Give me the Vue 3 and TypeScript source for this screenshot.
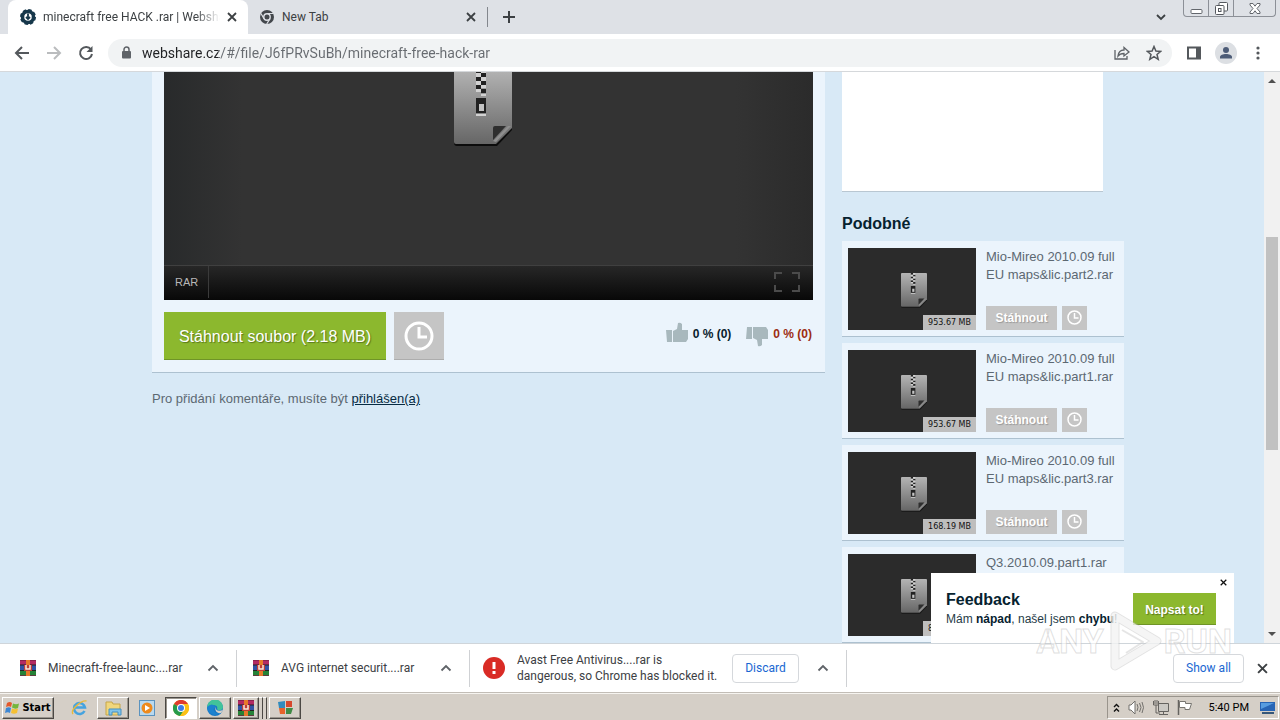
<script setup lang="ts">
import { ref } from 'vue'

interface SimilarFile {
  lines: string[]
  size: string
}

interface DownloadItem {
  name: string
}

const address = ref('webshare.cz/#/file/J6fPRvSuBh/minecraft-free-hack-rar')

const similar: SimilarFile[] = [
  { lines: ['Mio-Mireo 2010.09 full', 'EU maps&lic.part2.rar'], size: '953.67 MB' },
  { lines: ['Mio-Mireo 2010.09 full', 'EU maps&lic.part1.rar'], size: '953.67 MB' },
  { lines: ['Mio-Mireo 2010.09 full', 'EU maps&lic.part3.rar'], size: '168.19 MB' },
  { lines: ['Q3.2010.09.part1.rar'], size: '858.31 MB' },
]

const downloads: DownloadItem[] = [
  { name: 'Minecraft-free-launc....rar' },
  { name: 'AVG internet securit....rar' },
]
</script>

<template>
  <div class="screen">
    <svg class="defs" width="0" height="0" aria-hidden="true">
      <defs>
        <linearGradient id="paper" x1="0" y1="0" x2="0" y2="1">
          <stop offset="0" stop-color="#b4b4b4" />
          <stop offset="1" stop-color="#666" />
        </linearGradient>
        <symbol id="zip" viewBox="0 0 58 78">
          <path d="M2 2h54q2 0 2 2v57L43 77H3q-3 0-3-3V4q0-2 2-2z" fill="#0c0c0c" />
          <path d="M2 0h54q2 0 2 2v57L42 75H2q-2 0-2-2V2q0-2 2-2z" fill="url(#paper)" />
          <path d="M39 71V59q0-2 2-2h11z" fill="#2e2e2e" />
          <path d="M39 72l15-15h3L42 73z" fill="#8e8e8e" />
          <path d="M22 0h5v4h-5zM27 4h5v4h-5zM22 8h5v4h-5zM27 12h5v4h-5zM22 16h5v4h-5zM27 20h5v4h-5zM22 29h10v15H22z" fill="#222" />
          <path d="M27 0h5v4h-5zM22 4h5v4h-5zM27 8h5v4h-5zM22 12h5v4h-5zM27 16h5v3h-5zM22 20h5v3h-5zM27 25h5v2h-5zM22 45h10v2H22z" fill="#d2d2d2" />
          <rect x="25" y="35" width="5" height="7" fill="#c4c4c4" />
        </symbol>
        <symbol id="clock" viewBox="0 0 30 30">
          <circle cx="15" cy="15" r="13" fill="none" stroke="#fff" stroke-width="3" />
          <path d="M15 6v10h8" fill="none" stroke="#fff" stroke-width="3" />
        </symbol>
        <symbol id="cross" viewBox="0 0 10 10">
          <path d="M1 1l8 8M9 1L1 9" fill="none" stroke="currentColor" stroke-width="1.8" />
        </symbol>
        <symbol id="chevron" viewBox="0 0 12 8">
          <path d="M1.5 6.5L6 2l4.5 4.5" fill="none" stroke="#5f6368" stroke-width="1.8" />
        </symbol>
        <symbol id="winrar" viewBox="0 0 16 16">
          <rect y="0" width="16" height="5" fill="#b32a63" />
          <rect y="5" width="16" height="6" fill="#3152a5" />
          <rect y="11" width="16" height="5" fill="#268237" />
          <path d="M0 5h16M0 10.500h16" stroke="#222" />
          <path d="M0 .5h16M0 15.500h16" stroke="#772044" stroke-width=".7" />
          <rect x="6" width="4" height="16" fill="#e77a2a" />
          <rect x="4" y="5" width="8" height="6" fill="#be3c38" />
          <path d="M6 5v4h4V5" fill="none" stroke="#f7e9dc" stroke-width="1.500" />
        </symbol>
        <symbol id="chrome" viewBox="0 0 16 16">
          <circle cx="8" cy="8" r="8" fill="#fbc116" />
          <path d="M8 8L1 4a8 8 0 0 1 14 0z" fill="#df3b2f" />
          <path d="M8 8L1 4a8 8 0 0 0 6 12l4.500-6.500z" fill="#269b4b" />
          <path d="M8 4h7a8 8 0 0 1-8 12l4.500-6z" fill="#fbc116" />
          <circle cx="8" cy="8" r="4" fill="#fff" />
          <circle cx="8" cy="8" r="3" fill="#3c7de6" />
        </symbol>
        <symbol id="thumb" viewBox="0 0 22 20">
          <path d="M0 8h6v12H1zM7 9l4-2 1-6q2-1 4 1v6h6v9l-2 3H7z" fill="#a8b8bd" />
        </symbol>
      </defs>
    </svg>

    <header class="tabs">
      <div class="tab active">
        <svg width="16" height="16" viewBox="0 0 16 16">
          <circle cx="8" cy="8" r="5.500" fill="none" stroke="#17384b" stroke-width="3.500" />
          <circle cx="8" cy="8" r="7" fill="none" stroke="#17384b" stroke-width="2" stroke-dasharray="3.500 2" />
          <path d="M8 4.500v5M6 8l2 2 2-2" fill="none" stroke="#17384b" stroke-width="1.800" />
        </svg>
        <span class="tab-title fade">minecraft free HACK .rar | Webshare</span>
        <button class="plain" aria-label="Close tab"><svg width="10" height="10"><use href="#cross" /></svg></button>
      </div>
      <div class="tab">
        <svg width="14" height="14" viewBox="0 0 14 14">
          <circle cx="7" cy="7" r="7" fill="#43474c" />
          <circle cx="7" cy="7" r="3.200" fill="#43474c" stroke="#dee1e6" stroke-width="1.400" />
          <path d="M7 3.500h6.500M4 8.700L1 3.500M10 8.700L6.700 14" stroke="#dee1e6" stroke-width="1.200" />
        </svg>
        <span class="tab-title">New Tab</span>
        <button class="plain" aria-label="Close tab"><svg width="10" height="10"><use href="#cross" /></svg></button>
      </div>
      <i class="tab-sep"></i>
      <button class="plain new-tab" aria-label="New tab">
        <svg width="12" height="12" viewBox="0 0 12 12"><path d="M6 0v12M0 6h12" stroke="#3c4043" stroke-width="2" /></svg>
      </button>
      <button class="plain tab-search" aria-label="Search tabs">
        <svg width="10" height="7" viewBox="0 0 10 7"><path d="M1 1l4 4 4-4" fill="none" stroke="#3c4043" stroke-width="1.800" /></svg>
      </button>
      <div class="window-buttons">
        <button aria-label="Minimize"><svg width="13" height="13" viewBox="0 0 13 13"><rect x="1" y="7.500" width="11" height="4" rx="1" fill="#fff" stroke="#63676d" /></svg></button>
        <button aria-label="Restore"><svg width="13" height="13" viewBox="0 0 13 13" fill="#fff" stroke="#54585e"><rect x="4" y=".5" width="8.500" height="8.500" rx="1" /><rect x=".5" y="3.500" width="8.500" height="9" rx="1" /><rect x="3.500" y="6.500" width="2.500" height="3" /></svg></button>
        <button class="wide" aria-label="Close"><svg width="12" height="11" viewBox="0 0 12 11"><path d="M1 .5h3l2 2.700L8 .5h3v1.500L8 5.500l3 3.500v1.500H8L6 7.800 4 10.500H1V9l3-3.500L1 2z" fill="#fff" stroke="#63676d" /></svg></button>
      </div>
    </header>

    <nav class="toolbar">
      <button class="plain nav" aria-label="Back"><svg width="16" height="14" viewBox="0 0 16 14"><path d="M8 1L2 7l6 6M2 7h13" fill="none" stroke="#54585c" stroke-width="2" /></svg></button>
      <button class="plain nav" aria-label="Forward"><svg width="16" height="14" viewBox="0 0 16 14"><path d="M8 1l6 6-6 6M14 7H1" fill="none" stroke="#babcbe" stroke-width="2" /></svg></button>
      <button class="plain nav" aria-label="Reload"><svg width="16" height="16" viewBox="0 0 16 16"><path d="M13 4.500A6 6 0 1 0 14 9" fill="none" stroke="#54585c" stroke-width="2" /><path d="M14.500 1v6h-6z" fill="#54585c" /></svg></button>
      <div class="omnibox">
        <svg width="10" height="13" viewBox="0 0 10 13"><rect x="1" y="5" width="9" height="7.500" rx="1" fill="#5f6368" /><path d="M3 5V3.500a2.500 2.500 0 0 1 5 0V5" fill="none" stroke="#5f6368" stroke-width="1.500" /></svg>
        <input v-model="address" type="text" aria-label="Address" />
        <button class="plain" aria-label="Share"><svg width="16" height="14" viewBox="0 0 16 14" fill="none" stroke="#5f6368" stroke-width="1.300"><path d="M1 4v9h12v-3" /><path d="M4 10c.5-4 3-6 6-6V1.500L15 6l-5 4V7.500C7 7.500 5.500 8 4 10z" /></svg></button>
        <button class="plain" aria-label="Bookmark"><svg width="16" height="16" viewBox="0 0 16 16"><path d="M8 1.500l1.900 4.500 4.800.4-3.700 3.100 1.200 4.800L8 11.700l-4.200 2.600L5 9.500 1.300 6.400 6.100 6z" fill="none" stroke="#54585c" stroke-width="1.500" /></svg></button>
      </div>
      <button class="plain side" aria-label="Side panel"><svg width="14" height="14" viewBox="0 0 14 14"><rect x="1" y="1.500" width="12" height="11" fill="#fff" stroke="#54585c" stroke-width="2" /><path d="M9 1h4v12H9z" fill="#54585c" /></svg></button>
      <button class="plain side avatar" aria-label="Profile"><svg width="14" height="14" viewBox="0 0 14 14"><circle cx="7" cy="4" r="3" fill="#4d5c77" /><path d="M1 12.500V11c0-4 12-4 12 0v1.500z" fill="#4d5c77" /></svg></button>
      <button class="plain side" aria-label="Menu"><svg width="4" height="14" viewBox="0 0 4 14" fill="#54585c"><circle cx="2" cy="2" r="1.600" /><circle cx="2" cy="7" r="1.600" /><circle cx="2" cy="12" r="1.600" /></svg></button>
    </nav>

    <div class="viewport">
      <div class="page">
        <div class="container">
          <main>
            <section class="panel">
              <div class="player">
                <div class="stage"><svg width="58" height="78"><use href="#zip" /></svg></div>
                <div class="controls">
                  <span class="format">RAR</span>
                  <button class="plain" aria-label="Full screen"><svg width="26" height="20" viewBox="0 0 26 20"><path d="M8 1H1v6M18 1h7v6M8 19H1v-6M18 19h7v-6" fill="none" stroke="#4b4b4b" stroke-width="2" /></svg></button>
                </div>
              </div>
              <div class="actions">
                <button class="download">Stáhnout soubor (2.18 MB)</button>
                <button class="later" aria-label="Na později"><svg width="30" height="30"><use href="#clock" /></svg></button>
                <div class="votes">
                  <button class="plain vote"><svg width="22" height="20"><use href="#thumb" /></svg>0 % (0)</button>
                  <button class="plain vote down"><svg class="flip" width="22" height="20"><use href="#thumb" /></svg>0 % (0)</button>
                </div>
              </div>
            </section>
            <p class="comment">Pro přidání komentáře, musíte být <a href="#">přihlášen(a)</a></p>
          </main>
          <aside>
            <div class="blank"></div>
            <h2>Podobné</h2>
            <ul>
              <li v-for="(file, i) in similar" :key="i">
                <div class="preview">
                  <svg width="26" height="35"><use href="#zip" /></svg>
                  <span class="size">{{ file.size }}</span>
                </div>
                <div class="info">
                  <div class="name"><div v-for="line in file.lines" :key="line">{{ line }}</div></div>
                  <div class="row">
                    <button class="get">Stáhnout</button>
                    <button class="get small" aria-label="Na později"><svg width="15" height="15"><use href="#clock" /></svg></button>
                  </div>
                </div>
              </li>
            </ul>
          </aside>
        </div>
        <div class="feedback">
          <div>
            <h3>Feedback</h3>
            <p>Mám <b>nápad</b>, našel jsem <b>chybu</b>!</p>
          </div>
          <button class="write">Napsat to!</button>
          <button class="plain dismiss" aria-label="Zavřít"><svg width="7" height="7"><use href="#cross" /></svg></button>
        </div>
      </div>
      <div class="scrollbar" aria-hidden="true">
        <svg width="8" height="4" viewBox="0 0 8 4"><path d="M4 0l4 4H0z" fill="#505050" /></svg>
        <i class="before"></i><i class="handle"></i><i class="after"></i>
        <svg width="8" height="4" viewBox="0 0 8 4"><path d="M0 0h8L4 4z" fill="#505050" /></svg>
      </div>
    </div>

    <footer class="shelf">
      <div v-for="item in downloads" :key="item.name" class="item">
        <svg width="16" height="16"><use href="#winrar" /></svg>
        <span>{{ item.name }}</span>
        <button class="plain" aria-label="Options"><svg width="12" height="8"><use href="#chevron" /></svg></button>
      </div>
      <div class="item blocked">
        <svg width="22" height="22" viewBox="0 0 22 22"><circle cx="11" cy="11" r="11" fill="#d92b25" /><path d="M11 5v7M11 14v3" stroke="#fff" stroke-width="3" /></svg>
        <span>Avast Free Antivirus....rar is<br />dangerous, so Chrome has blocked it.</span>
        <button class="outlined">Discard</button>
        <button class="plain" aria-label="Options"><svg width="12" height="8"><use href="#chevron" /></svg></button>
      </div>
      <button class="outlined all">Show all</button>
      <button class="plain shelf-close" aria-label="Close"><svg width="11" height="11"><use href="#cross" /></svg></button>
    </footer>

    <div class="taskbar">
      <button class="start">
        <svg width="15" height="14" viewBox="0 0 15 14"><path d="M2 2q3-2 5 0L6 6Q4 4.500 1 6z" fill="#e4592c" /><path d="M8 2.500q3 1.500 6 0L13 7q-3 1.500-6-.5z" fill="#75b63b" /><path d="M1 7q3-1.500 5 0l-1 5q-2-1.500-5 0z" fill="#3c87d4" /><path d="M7 7.500q3 1.500 6 0l-1 4.500q-3 1.500-6 0z" fill="#f5c032" /></svg>Start
      </button>
      <button class="plain task" aria-label="Internet Explorer"><svg width="17" height="17" viewBox="0 0 17 17"><path d="M13.500 12A5.500 5.500 0 1 1 14 8.500H4" fill="none" stroke="#45a3df" stroke-width="2.500" /><path d="M2 15C-1 11 10 1 15.500 2" fill="none" stroke="#e8b93c" stroke-width="1.400" /></svg></button>
      <button class="task raised" aria-label="Explorer"><svg width="17" height="16" viewBox="0 0 17 16"><path d="M1 2h6l1 2h7v11H1z" fill="#f0d67c" stroke="#c5a548" /><path d="M4 9h12v6h-3v-3H7v3H4z" fill="#81c4ea" stroke="#4590c2" /></svg></button>
      <button class="plain task" aria-label="Media Player"><svg width="16" height="16" viewBox="0 0 16 16"><rect x=".5" y=".5" width="15" height="15" fill="#b9d9ef" stroke="#5b93bf" /><circle cx="8" cy="8" r="5.500" fill="#ee8a1d" /><path d="M6 5l5 3-5 3z" fill="#fff" /></svg></button>
      <button class="task raised pressed" aria-label="Chrome"><svg width="16" height="16"><use href="#chrome" /></svg></button>
      <button class="task raised" aria-label="Edge"><svg width="16" height="16" viewBox="0 0 16 16"><circle cx="8" cy="8" r="8" fill="#1878c4" /><path d="M0 8a8 8 0 0 1 16-1c0 4-5 4-6 2 2-4-6-6-10-1z" fill="#42c39a" /><path d="M0 7q5-5 9 0-5 2 0 6 3 1 5-1A8 8 0 0 1 0 7z" fill="#1c82cf" /><path d="M9 7c-1 3 2 5 7 3l-2 3c-4 1-7-3-5-6z" fill="#d4d0c8" /></svg></button>
      <div class="stack">
        <button class="task raised" aria-label="WinRAR"><svg width="16" height="16"><use href="#winrar" /></svg></button><i></i><i></i>
      </div>
      <button class="task raised" aria-label="Security"><svg width="15" height="15" viewBox="0 0 15 15"><path d="M0 2l7-1v7H1z" fill="#328bbd" /><path d="M8 1h6v6H8z" fill="#d7482d" /><path d="M1 8h6v6H2z" fill="#e8622a" /><path d="M8 8h7l-2 6H8z" fill="#408a45" /></svg></button>
      <div class="tray">
        <svg width="7" height="10" viewBox="0 0 7 10"><path d="M1 4l2.500-2.500L6 4M1 8.500L3.500 6 6 8.500" fill="none" stroke="#111" stroke-width="1.400" /></svg>
        <svg width="17" height="15" viewBox="0 0 17 15" fill="none" stroke="#72706c"><path d="M1 5h2l4-4v13l-4-4H1z" fill="#fff" /><path d="M9 4q2 3 0 7M11.500 3q3 4.500 0 9M14 2q3 5.500 0 11" /></svg>
        <svg width="16" height="15" viewBox="0 0 16 15" stroke="#65635f"><path d="M5.500 3.500h10v8h-10z" fill="#cbc9c4" /><path d="M6 14.500h9M10.500 12v2" /><path d="M.5 1v4h5V1M2 0v4M4 0v4M3 5v8h4" fill="none" /></svg>
        <svg width="16" height="15" viewBox="0 0 16 15"><path d="M1.500 0v15" stroke="#65635f" stroke-width="1.500" /><path d="M2.500 1.500h6v2h6l-2 6H8v-2H2.500z" fill="#fff" stroke="#777570" /></svg>
        <time>5:40 PM</time>
        <svg class="desk" width="15" height="13" viewBox="0 0 15 13"><path d="M0 1h15v9H0z" fill="#2765b5" /><path d="M1 2h13L1 8z" fill="#579de0" /><path d="M2 11h12v2H2z" fill="#365779" /></svg>
      </div>
    </div>

    <div class="watermark" aria-hidden="true">
      <span>ANY</span>
      <svg width="60" height="66" viewBox="0 0 60 66" fill="none" stroke-linejoin="round">
        <path d="M11 8l42 25-42 25z" stroke="#b9b9b9" stroke-opacity=".4" stroke-width="9" />
        <path d="M11 8l42 25-42 25z" stroke="#fff" stroke-opacity=".65" stroke-width="7" />
        <path d="M18 22l21 12-17 11" stroke="#ccc" stroke-opacity=".5" stroke-width="2" />
      </svg>
      <span>RUN</span>
    </div>
  </div>
</template>

<style>
html,
body {
  overflow: hidden;
}
</style>

<style scoped>
.screen {
  position: relative;
  display: flex;
  flex-direction: column;
  height: 100vh;
  overflow: hidden;
  font: 12px/16px Roboto, "Noto Sans", sans-serif;
  color: #3c4043;
}
.screen *,
.screen *::before {
  box-sizing: border-box;
}
.defs {
  position: absolute;
}
svg {
  display: block;
  flex: none;
}
button {
  font: inherit;
  color: inherit;
  padding: 0;
  margin: 0;
  border: 0;
  border-radius: 0;
}
.plain {
  display: flex;
  align-items: center;
  justify-content: center;
  background: none;
}
.tabs {
  display: flex;
  align-items: center;
  height: 34px;
  flex: none;
  padding-left: 8px;
  background: #dee1e6;
}
.tab {
  display: flex;
  align-items: center;
  gap: 8px;
  width: 239px;
  height: 34px;
  padding: 0 11px 0 12px;
}
.tab.active {
  width: 240px;
  gap: 7px;
  background: #fff;
  border-radius: 8px 8px 0 0;
}
.tab-title {
  flex: 1;
  overflow: hidden;
  white-space: nowrap;
}
.fade {
  mask-image: linear-gradient(to right, #000 86%, transparent);
}
.tab-sep {
  width: 1px;
  height: 20px;
  background: #83878d;
}
.new-tab {
  width: 42px;
}
.tab-search {
  width: 30px;
  margin-left: auto;
}
.window-buttons {
  display: flex;
  align-self: flex-start;
  height: 17px;
  margin: 0 4px 0 7px;
  border: 1px solid #8c9097;
  border-top: 0;
  border-radius: 0 0 4px 4px;
}
.window-buttons button {
  display: flex;
  align-items: center;
  justify-content: center;
  width: 25px;
  background: none;
  border-right: 1px solid #8c9097;
}
.window-buttons .wide {
  width: 41px;
  border-right: 0;
}
.toolbar {
  display: flex;
  align-items: center;
  flex: none;
  height: 38px;
  padding: 0 6px;
  background: #fff;
  border-bottom: 1px solid #d5d8db;
}
.nav,
.side {
  width: 32px;
  height: 28px;
}
.omnibox {
  display: flex;
  align-items: center;
  flex: 1;
  height: 28px;
  margin: 0 6px;
  padding: 0 8px 0 13px;
  gap: 11px;
  border-radius: 14px;
  background: #f1f3f4;
}
.omnibox input {
  flex: 1;
  min-width: 0;
  padding: 0;
  border: 0;
  outline: 0;
  font: 14px/20px Roboto, "Noto Sans", sans-serif;
  color: transparent;
  background: linear-gradient(to right, #202124 76px, #676b70 76px);
  background-clip: text;
}
.omnibox button {
  width: 21px;
}
.avatar {
  width: 22px;
  height: 22px;
  margin: 0 5px;
  border-radius: 50%;
  background: #dcdfe3;
}
.viewport {
  display: flex;
  flex: 1;
  min-height: 0;
}
.page {
  position: relative;
  flex: 1;
  overflow: hidden;
  background: #d8e9f6;
  font: 13px/18px "Liberation Sans", Arial, sans-serif;
  color: #5c6872;
}
.container {
  display: flex;
  gap: 17px;
  max-width: 960px;
  margin: 0 auto;
}
main {
  flex: 1;
}
.panel {
  padding: 0 12px 12px;
  background: #ebf4fc;
  border-bottom: 1px solid #adc1d0;
}
.player {
  background: linear-gradient(to right, #282a2b, #333 12%, #333 88%, #2b2b2b);
}
.stage {
  display: flex;
  justify-content: center;
  height: 193px;
  padding-right: 11px;
  overflow: hidden;
}
.stage svg {
  margin-top: -3px;
}
.controls {
  display: flex;
  align-items: center;
  justify-content: space-between;
  height: 35px;
  padding: 0 13px 2px 0;
  border-top: 1px solid #404040;
  background: linear-gradient(#272727, #080808);
}
.format {
  width: 45px;
  padding-left: 11px;
  border-right: 1px solid #3b3b3b;
  font-size: 11px;
  line-height: 32px;
  color: #b8b8b8;
}
.actions {
  display: flex;
  gap: 8px;
  padding-top: 12px;
}
.download {
  width: 222px;
  height: 48px;
  padding-top: 3px;
  background: #8cb82e;
  border-bottom: 1px solid #6f9427;
  font-size: 16px;
  color: #fff;
  text-shadow: 1px 1px 1px #58771b;
}
.later {
  display: flex;
  align-items: center;
  justify-content: center;
  width: 50px;
  height: 48px;
  background: #c5c5c5;
  border-bottom: 1px solid #adadad;
}
.votes {
  display: flex;
  align-items: flex-start;
  gap: 15px;
  margin: 10px 1px 0 auto;
}
.vote {
  gap: 5px;
  height: 24px;
  font: bold 12px/24px "Liberation Sans", Arial, sans-serif;
  color: #08202d;
}
.vote svg {
  margin-bottom: 4px;
}
.down {
  color: #9c2d12;
}
.vote .flip {
  transform: scaleY(-1);
  margin: 6px 0 0;
}
.comment {
  margin: 17px 0 0;
}
.comment a {
  color: #062b43;
}
aside {
  width: 282px;
  flex: none;
  margin-right: -12px;
}
.blank {
  width: 261px;
  height: 120px;
  background: #fff;
  border-bottom: 1px solid #b9c7d2;
}
h2 {
  margin: 22px 0 8px;
  font-size: 16px;
  line-height: 19px;
  color: #06222f;
}
ul {
  display: flex;
  flex-direction: column;
  gap: 6px;
  margin: 0;
  padding: 0;
  list-style: none;
}
li {
  display: flex;
  gap: 10px;
  height: 96px;
  padding: 7px 6px 6px;
  background: #ebf4fc;
  border-bottom: 1px solid #adc1d0;
}
.preview {
  position: relative;
  display: flex;
  align-items: center;
  justify-content: center;
  width: 128px;
  height: 82px;
  padding: 2px 0 0 4px;
  background: #2b2b2b;
}
.size {
  position: absolute;
  right: 0;
  bottom: 0;
  padding: 0 5px;
  background: #bebebe;
  font: 8px/15px "DejaVu Sans", sans-serif;
  color: #111;
}
.info {
  display: flex;
  flex-direction: column;
  justify-content: space-between;
  white-space: nowrap;
}
.row {
  display: flex;
  gap: 5px;
}
.get {
  width: 71px;
  height: 24px;
  background: #c5c5c5;
  font: bold 12px/24px "Liberation Sans", Arial, sans-serif;
  color: #fff;
  text-shadow: 1px 1px 1px #999;
}
.small {
  display: flex;
  align-items: center;
  justify-content: center;
  width: 25px;
  padding-bottom: 2px;
}
.feedback {
  position: absolute;
  right: 30px;
  bottom: 0;
  display: flex;
  justify-content: space-between;
  width: 303px;
  height: 70px;
  padding: 17px 18px 0 15px;
  background: #fff;
  color: #263b47;
}
.feedback > div {
  white-space: nowrap;
}
.feedback h3 {
  margin: 0;
  font-size: 16px;
  line-height: 19px;
  color: #06222f;
}
.feedback p {
  margin: 0;
  font-size: 12px;
  line-height: 20px;
}
.feedback b {
  color: #06222f;
}
.write {
  width: 83px;
  height: 32px;
  margin-top: 3px;
  padding-top: 2px;
  background: #8cb82e;
  border-bottom: 1px solid #6f9427;
  font-weight: bold;
  font-size: 12px;
  color: #fff;
  text-shadow: 1px 1px 1px #58771b;
}
.dismiss {
  position: absolute;
  top: 6px;
  right: 7px;
  color: #111;
}
.scrollbar {
  display: flex;
  flex-direction: column;
  align-items: center;
  width: 16px;
  padding: 7px 0;
  background: #f1f1f1;
}
.before {
  flex: 154;
}
.handle {
  flex: 213;
  width: 12px;
  background: #c1c1c1;
}
.after {
  flex: 182;
}
.shelf {
  display: flex;
  align-items: center;
  flex: none;
  height: 49px;
  padding-right: 12px;
  border-top: 1px solid #cfd5da;
  background: #fff;
}
.item {
  display: flex;
  align-items: center;
  gap: 12px;
  width: 233px;
  height: 37px;
  padding: 0 17px 0 16px;
  border-right: 1px solid #cfd1d4;
  white-space: nowrap;
}
.item:first-child {
  width: 237px;
  padding-left: 20px;
}
.item span {
  flex: 1;
}
.blocked {
  width: 377px;
  padding-left: 13px;
}
.outlined {
  height: 29px;
  width: 67px;
  background: #fff;
  border: 1px solid #d5d8dc;
  border-radius: 4px;
  color: #1967d2;
}
.blocked .outlined {
  margin: 0 6px 0 -6px;
}
.all {
  width: 71px;
  margin-left: auto;
}
.shelf-close {
  margin-left: 13px;
}
.taskbar {
  display: flex;
  align-items: center;
  flex: none;
  height: 28px;
  padding: 2px 1px 0 2px;
  background: #d5cfc7;
  border-top: 1px solid #c2bdb6;
  box-shadow: inset 0 1px #f6f4f0;
}
.start,
.raised {
  display: flex;
  align-items: center;
  justify-content: center;
  height: 22px;
  border: 1px solid;
  border-color: #fff #4b4844 #4b4844 #fff;
  box-shadow: inset -1px -1px #99948c;
  background: #d5cfc7;
}
.start {
  gap: 2px;
  width: 52px;
  margin-right: 9px;
  font: bold 11px/20px "DejaVu Sans Condensed", "DejaVu Sans", sans-serif;
  color: #000;
}
.task {
  width: 32px;
  margin-right: 2px;
}
.pressed {
  background: #fff;
  border-color: #4b4844 #fff #fff #4b4844;
  box-shadow: inset 1px 1px #99948c;
}
.stack {
  display: flex;
  margin-right: 2px;
}
.stack .task {
  width: 26px;
  margin: 0;
}
.stack i {
  width: 4px;
  border-right: 1px solid #4b4844;
  border-top: 1px solid #fff;
}
.tray {
  display: flex;
  align-items: center;
  gap: 8px;
  height: 23px;
  margin-left: auto;
  padding: 0 3px 0 5px;
  border: 1px solid;
  border-color: #99948c #fff #fff #99948c;
  font-size: 11px;
  color: #000;
}
.tray time {
  margin-left: 8px;
  white-space: nowrap;
}
.desk {
  margin-left: 3px;
}
.watermark {
  position: absolute;
  right: 48px;
  bottom: 46px;
  display: flex;
  align-items: center;
  font: bold 34px/66px Roboto, "Noto Sans", sans-serif;
  color: rgba(255, 255, 255, 0.6);
  -webkit-text-stroke: 1px rgba(175, 175, 175, 0.4);
  pointer-events: none;
}
</style>
